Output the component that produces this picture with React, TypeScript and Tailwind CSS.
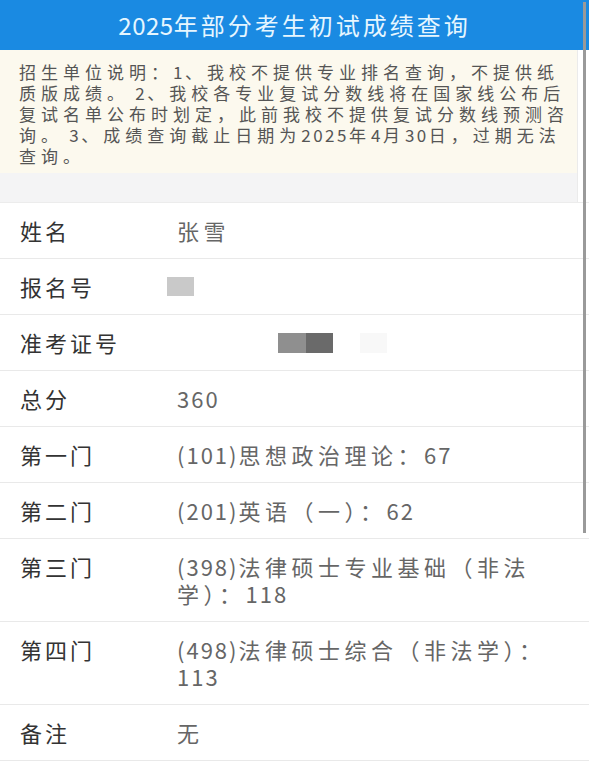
const font = { fontFamily: '"Noto Sans CJK SC", "Noto Sans", sans-serif' };

// CJK runs in the screenshot are set wider than Latin digits, so they get their own tracking
const cjkRe = /([\u3000-\u303f\u4e00-\u9fff\uff00-\uffef]+)/;

function Txt({ text, cjk, other }: { text: string; cjk: string; other: string }) {
  const parts = text.split(cjkRe).filter(Boolean);
  return (
    <>
      {parts.map((p, i) => (
        <span key={i} className={"inline-block whitespace-pre " + (cjkRe.test(p) ? cjk : other)}>
          {p}
        </span>
      ))}
    </>
  );
}

type Row = { label: string; lines?: string[]; masked?: "reg" | "exam" };

const rows: Row[] = [
  { label: "姓名", lines: ["张雪"] },
  { label: "报名号", masked: "reg" },
  { label: "准考证号", masked: "exam" },
  { label: "总分", lines: ["360"] },
  { label: "第一门", lines: ["(101)思想政治理论：67"] },
  { label: "第二门", lines: ["(201)英语（一）：62"] },
  { label: "第三门", lines: ["(398)法律硕士专业基础（非法", "学）：118"] },
  { label: "第四门", lines: ["(498)法律硕士综合（非法学）：", "113"] },
  { label: "备注", lines: ["无"] },
];

const notice = [
  "招生单位说明：1、我校不提供专业排名查询，不提供纸",
  "质版成绩。 2、我校各专业复试分数线将在国家线公布后",
  "复试名单公布时划定，此前我校不提供复试分数线预测咨",
  "询。 3、成绩查询截止日期为2025年4月30日，过期无法",
  "查询。",
];

function Masked({ kind }: { kind: "reg" | "exam" }) {
  if (kind === "reg") {
    return (
      <div className="flex h-[27px] items-center -ml-[10px]">
        <div className="h-[19px] w-[27px] bg-[#c9c9c9]" />
      </div>
    );
  }
  return (
    <div className="flex h-[27px] items-center pl-[101px]">
      <div className="h-[20px] w-[28px] bg-[#8f8f8f]" />
      <div className="h-[20px] w-[27px] bg-[#6a6a6a]" />
      <div className="ml-[27px] h-[20px] w-[27px] bg-[#f8f8f8]" />
    </div>
  );
}

export default function App() {
  return (
    <div className="relative h-[762px] w-[589px] overflow-hidden bg-white" style={font}>
      {/* title bar */}
      <div className="flex h-[50px] items-center justify-center bg-[#1a8ae2]">
        <h1 className="text-[24px] leading-[30px] text-[#e6f6ff] whitespace-nowrap">
          <Txt text="2025年部分考生初试成绩查询" cjk="tracking-[3px]" other="tracking-[0.5px]" />
        </h1>
      </div>

      {/* notice */}
      <div className="mr-[11px] border-r border-[#ebebeb] bg-[#fcf9ee] pl-[19px] pt-[11px] pb-[7px]">
        {notice.map((l) => (
          <div key={l} className="whitespace-nowrap text-[17px] leading-[21px] text-[#555]">
            <Txt text={l} cjk="tracking-[5px]" other="tracking-[2.5px]" />
          </div>
        ))}
      </div>
      <div className="mr-[11px] h-[29px] border-r border-[#ebebeb] bg-[#f4f4f5]" />

      {/* result table */}
      <div className="border-t border-[#ececec]">
        {rows.map((r) => (
          <div key={r.label} className="flex border-b border-[#e9e9e9] pt-[14px] pb-[14px]">
            <div className="w-[177px] shrink-0 pl-[20px] text-[22px] leading-[27px] text-[#333]">
              <Txt text={r.label} cjk="tracking-[3px]" other="" />
            </div>
            <div className="text-[22px] leading-[27px] text-[#666]">
              {r.masked ? (
                <Masked kind={r.masked} />
              ) : (
                r.lines!.map((l) => (
                  <div key={l} className="whitespace-nowrap">
                    <Txt text={l} cjk="tracking-[4.5px]" other="tracking-[2px]" />
                  </div>
                ))
              )}
            </div>
          </div>
        ))}
      </div>

      {/* scrollbar */}
      <div className="absolute right-[3px] top-[2px] h-[531px] w-[3px] bg-[#9a9a9a]" />
    </div>
  );
}
